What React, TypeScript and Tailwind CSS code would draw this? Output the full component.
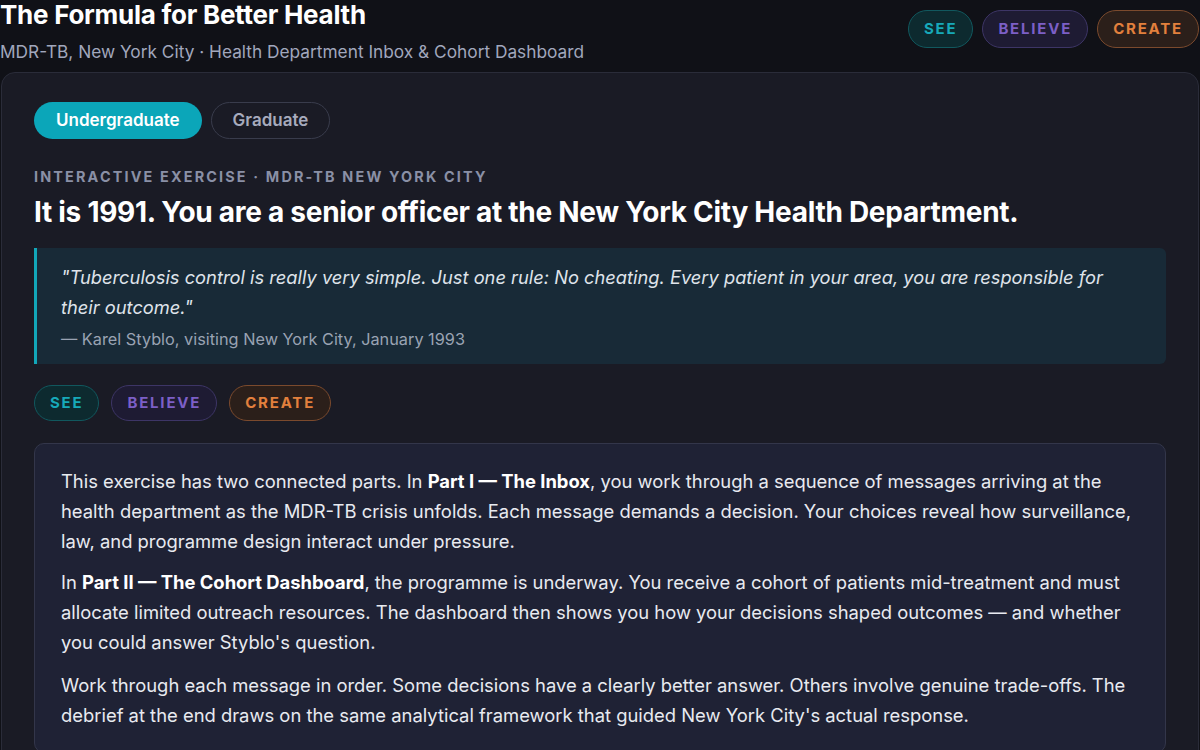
const pills = [
  { label: "SEE", cls: "border-[#11585e] bg-[#0d2a2f] text-[#17a9b9]" },
  { label: "BELIEVE", cls: "border-[#3d3566] bg-[#1e1b33] text-[#7c5fc6]" },
  { label: "CREATE", cls: "border-[#7b4a2d] bg-[#2b1f1a] text-[#e2803d]" },
];

function Pills({ size }: { size: "lg" | "sm" }) {
  return (
    <div className={`flex items-center ${size === "lg" ? "gap-[9px]" : "gap-[12px]"}`}>
      {pills.map((p) => (
        <span
          key={p.label}
          className={`inline-flex items-center rounded-full border px-[15px] text-[15px] font-bold uppercase tracking-[0.12em] ${p.cls} ${
            size === "lg" ? "h-[38px]" : "h-[36px]"
          }`}
        >
          {p.label}
        </span>
      ))}
    </div>
  );
}

export default function App() {
  return (
    <div className="min-h-screen overflow-hidden bg-[#101117] font-['Inter',sans-serif] text-[#e6e8ef]">
      <header className="flex items-start justify-between">
        <div>
          <h1 className="pt-[1px] text-[26px] font-bold leading-[28px] tracking-[-0.01em] text-white">
            The Formula for Better Health
          </h1>
          <p className="mt-[11px] text-[17.3px] leading-[24px] text-[#a1a7bd]">
            MDR-TB, New York City · Health Department Inbox &amp; Cohort Dashboard
          </p>
        </div>
        <div className="mt-[10px] mr-[1px]">
          <Pills size="lg" />
        </div>
      </header>

      <main className="ml-[1px] mr-[1px] mt-[8px] rounded-[14px] border border-[#2a2c39] bg-[#1a1b25] px-8 pt-[29px] pb-8">
        <div className="flex items-center gap-[9px]">
          <button
            type="button"
            className="h-[37px] rounded-full bg-[#0ba6b9] px-[22px] text-[17px] font-semibold text-white"
          >
            Undergraduate
          </button>
          <button
            type="button"
            className="h-[37px] rounded-full border border-[#393c4c] px-[21px] text-[17px] font-semibold text-[#a7abbd]"
          >
            Graduate
          </button>
        </div>

        <p className="mt-[28px] text-[14.4px] font-bold uppercase leading-[20px] tracking-[0.15em] text-[#8a90a6]">
          Interactive exercise · MDR-TB New York City
        </p>
        <h2 className="mt-[8px] text-[28px] font-bold leading-[34px] tracking-[-0.01em] text-white">
          It is 1991. You are a senior officer at the New York City Health Department.
        </h2>

        <blockquote className="mt-[19px] rounded-r-[6px] border-l-[3px] border-[#12a7b9] bg-[#182a37] pt-[14px] pb-[13px] pl-6 pr-6">
          <p className="text-[18.3px] italic leading-[30px] text-[#dfe3ea]">
            "Tuberculosis control is really very simple. Just one rule: No cheating. Every patient in your area, you are
            responsible for their outcome."
          </p>
          <p className="mt-[5px] text-[16.3px] leading-[24px] text-[#9aa3b3]">
            — Karel Styblo, visiting New York City, January 1993
          </p>
        </blockquote>

        <div className="mt-[21px]">
          <Pills size="sm" />
        </div>

        <section className="mt-[22px] rounded-[10px] border border-[#33364a] bg-[#1f2235] pt-[22px] pb-[22px] pl-[26px] pr-6 text-[18.4px] leading-[30px] text-[#e8eaf0]">
          <p>
            This exercise has two connected parts. In <strong className="font-bold text-white">Part I — The Inbox</strong>,
            you work through a sequence of messages arriving at the health department as the MDR-TB crisis unfolds. Each
            message demands a decision. Your choices reveal how surveillance, law, and programme design interact under
            pressure.
          </p>
          <p className="mt-[11px]">
            In <strong className="font-bold text-white">Part II — The Cohort Dashboard</strong>, the programme is underway.
            You receive a cohort of patients mid-treatment and must allocate limited outreach resources. The dashboard then
            shows you how your decisions shaped outcomes — and whether you could answer Styblo's question.
          </p>
          <p className="mt-[13px]">
            Work through each message in order. Some decisions have a clearly better answer. Others involve genuine
            trade-offs. The debrief at the end draws on the same analytical framework that guided New York City's actual
            response.
          </p>
        </section>
      </main>
    </div>
  );
}
